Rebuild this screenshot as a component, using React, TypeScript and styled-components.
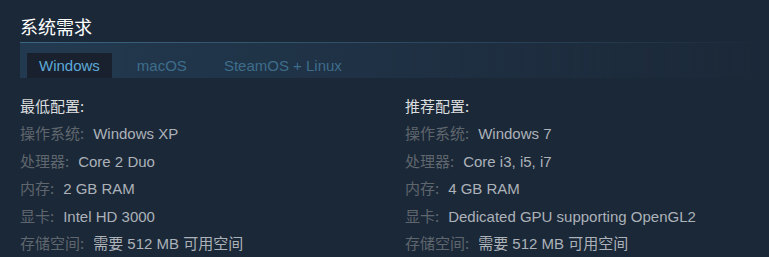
import React, { FC } from 'react';
import styled, { createGlobalStyle } from 'styled-components';

const GlobalStyle = createGlobalStyle`
  html, body {
    margin: 0;
    padding: 0;
    background: #1b2838;
  }
  body {
    font-family: "Liberation Sans", Arial, "Noto Sans CJK SC", sans-serif;
  }
`;

interface Spec {
  label: string;
  value: string;
}

const minSpecs: Spec[] = [
  { label: '操作系统', value: 'Windows XP' },
  { label: '处理器', value: 'Core 2 Duo' },
  { label: '内存', value: '2 GB RAM' },
  { label: '显卡', value: 'Intel HD 3000' },
  { label: '存储空间', value: '需要 512 MB 可用空间' },
];

const recSpecs: Spec[] = [
  { label: '操作系统', value: 'Windows 7' },
  { label: '处理器', value: 'Core i3, i5, i7' },
  { label: '内存', value: '4 GB RAM' },
  { label: '显卡', value: 'Dedicated GPU supporting OpenGL2' },
  { label: '存储空间', value: '需要 512 MB 可用空间' },
];

const tabs = ['Windows', 'macOS', 'SteamOS + Linux'];

const SpecColumn: FC<{ title: string; specs: Spec[] }> = ({ title, specs }) => (
  <Column>
    <ColumnTitle>{title}:</ColumnTitle>
    <SpecList>
      {specs.map((s) => (
        <SpecRow key={s.label}>
          <SpecLabel>{s.label}:</SpecLabel>
          <SpecValue>{s.value}</SpecValue>
        </SpecRow>
      ))}
    </SpecList>
  </Column>
);

export default function App() {
  return (
    <>
      <GlobalStyle />
      <Wrapper>
        <Heading>系统需求</Heading>
        <TabBar>
          {tabs.map((t, i) => (
            <Tab key={t} $active={i === 0}>
              {t}
            </Tab>
          ))}
        </TabBar>
        <Columns>
          <SpecColumn title="最低配置" specs={minSpecs} />
          <SpecColumn title="推荐配置" specs={recSpecs} />
        </Columns>
      </Wrapper>
    </>
  );
}

const Wrapper = styled.div`
  width: 769px;
  height: 257px;
  overflow: hidden;
  padding: 13px 0 0 20px;
  box-sizing: border-box;
  background: #1b2838;
`;

const Heading = styled.h2`
  margin: 0;
  font-family: "Noto Sans CJK SC", sans-serif;
  font-weight: 400;
  font-size: 18px;
  line-height: 26px;
  color: #ffffff;
  height: 29px;
`;

const TabBar = styled.div`
  display: flex;
  align-items: flex-end;
  height: 35px;
  padding-left: 7px;
  border-top: 1px solid transparent;
  border-image: linear-gradient(to right, #3b6684 0%, #2f4d66 45%, rgba(27, 40, 56, 0) 100%) 1;
  background: linear-gradient(to right, rgba(40, 72, 99, 0.55) 0%, rgba(33, 54, 75, 0.6) 50%, rgba(27, 40, 56, 0) 100%);
`;

const Tab = styled.div<{ $active?: boolean }>`
  height: 25px;
  line-height: 25px;
  padding: 0 12px;
  margin-right: 13px;
  font-size: 15px;
  color: ${({ $active }) => ($active ? '#5ea9d9' : '#3e6d8c')};
  background: ${({ $active }) => ($active ? '#18212d' : 'transparent')};
`;

const Columns = styled.div`
  display: grid;
  grid-template-columns: 385px 1fr;
  padding-top: 17px;
`;

const Column = styled.div`
  display: flex;
  flex-direction: column;
`;

const ColumnTitle = styled.div`
  font-size: 15px;
  line-height: 22px;
  color: #dcdedf;
  font-family: "Noto Sans CJK SC", sans-serif;
  margin-bottom: 2px;
`;

const SpecList = styled.ul`
  list-style: none;
  margin: 0;
  padding: 0;
`;

const SpecRow = styled.li`
  display: flex;
  align-items: baseline;
  height: 27.5px;
  font-size: 15px;
  line-height: 27.5px;
`;

const SpecLabel = styled.span`
  color: #5f666d;
  font-family: "Noto Sans CJK SC", sans-serif;
  margin-right: 9px;
`;

const SpecValue = styled.span`
  color: #acb2b8;
`;
